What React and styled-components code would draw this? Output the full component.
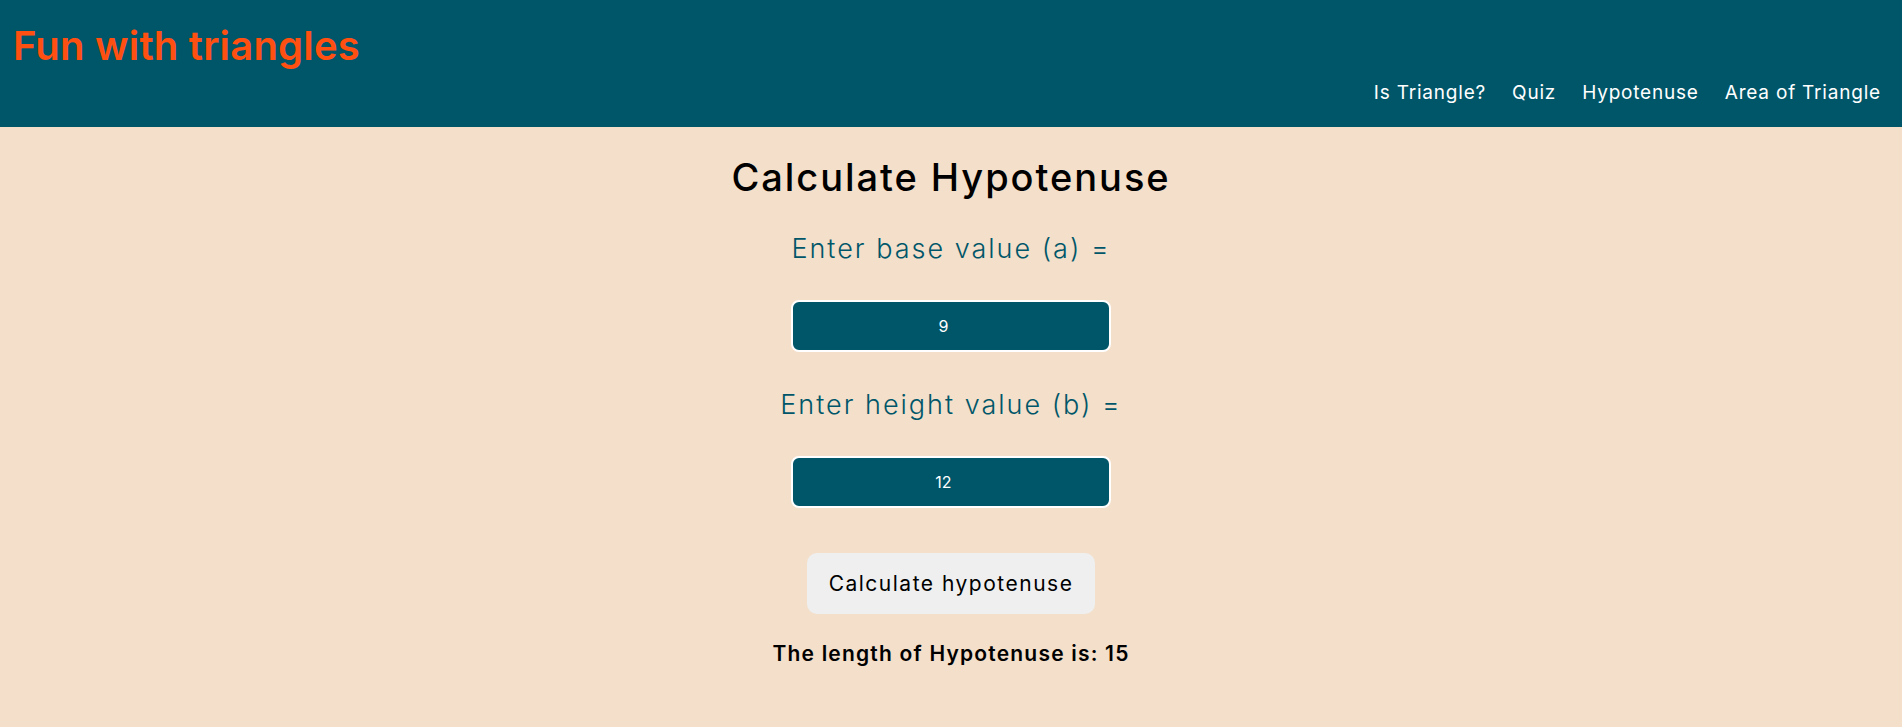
import React, { useState } from "react"
import styled, { createGlobalStyle } from "styled-components"

const GlobalStyle = createGlobalStyle`
  body {
    margin: 0;
    background: #f3dfca;
    font-family: "Inter", "Open Sans", sans-serif;
  }
`

const Header = styled.header`
  background: #005669;
  height: 127px;
  box-sizing: border-box;
  padding: 0 21px 0 13px;
  display: flex;
  flex-direction: column;
  justify-content: space-between;
`

const Brand = styled.h1`
  margin: 0;
  padding-top: 22px;
  color: #ff5012;
  font-size: 40px;
  font-weight: 600;
  line-height: 48px;
  letter-spacing: 0.2px;
`

const Nav = styled.nav`
  display: flex;
  justify-content: flex-end;
  gap: 26px;
  padding-bottom: 22px;
`

const NavLink = styled.a`
  color: #ffffff;
  text-decoration: none;
  font-size: 19px;
  line-height: 24px;
  letter-spacing: 0.8px;
  cursor: pointer;
`

const Main = styled.main`
  display: flex;
  flex-direction: column;
  align-items: center;
  padding-top: 24px;
`

const Title = styled.h2`
  margin: 0 0 28px;
  font-size: 38px;
  font-weight: 500;
  line-height: 52px;
  letter-spacing: 1.95px;
  color: #000;
`

const Label = styled.label`
  color: #005669;
  font-size: 27px;
  font-weight: 300;
  line-height: 36px;
  letter-spacing: 2px;
  margin-bottom: 33px;
`

const Input = styled.input`
  box-sizing: border-box;
  width: 320px;
  height: 52px;
  background: #005669;
  border: 2px solid #ffffff;
  border-radius: 8px;
  color: #ffffff;
  text-align: center;
  font-family: inherit;
  font-size: 16px;
  outline: none;
  margin-bottom: ${({ $gap }) => $gap}px;
`

const Button = styled.button`
  width: 288px;
  height: 61px;
  border: 0;
  border-radius: 10px;
  background: #efefef;
  color: #000;
  font-family: inherit;
  font-size: 21px;
  letter-spacing: 1.5px;
  cursor: pointer;
  margin-bottom: 25px;
`

const Result = styled.p`
  margin: 0;
  font-size: 21px;
  font-weight: 600;
  line-height: 30px;
  letter-spacing: 1.2px;
  color: #000;
`

export default function App() {
  const [base, setBase] = useState("9")
  const [height, setHeight] = useState("12")
  const [result, setResult] = useState(15)

  const calculate = () => {
    const a = Number(base)
    const b = Number(height)
    setResult(Math.sqrt(a * a + b * b))
  }

  return (
    <>
      <GlobalStyle />
      <Header>
        <Brand>Fun with triangles</Brand>
        <Nav>
          <NavLink>Is Triangle?</NavLink>
          <NavLink>Quiz</NavLink>
          <NavLink>Hypotenuse</NavLink>
          <NavLink>Area of Triangle</NavLink>
        </Nav>
      </Header>
      <Main>
        <Title>Calculate Hypotenuse</Title>
        <Label htmlFor="base">Enter base value (a) =</Label>
        <Input
          id="base"
          type="number"
          value={base}
          $gap={35}
          onChange={(e) => setBase(e.target.value)}
        />
        <Label htmlFor="height">Enter height value (b) =</Label>
        <Input
          id="height"
          type="number"
          value={height}
          $gap={45}
          onChange={(e) => setHeight(e.target.value)}
        />
        <Button onClick={calculate}>Calculate hypotenuse</Button>
        <Result>The length of Hypotenuse is: {result}</Result>
      </Main>
    </>
  )
}
